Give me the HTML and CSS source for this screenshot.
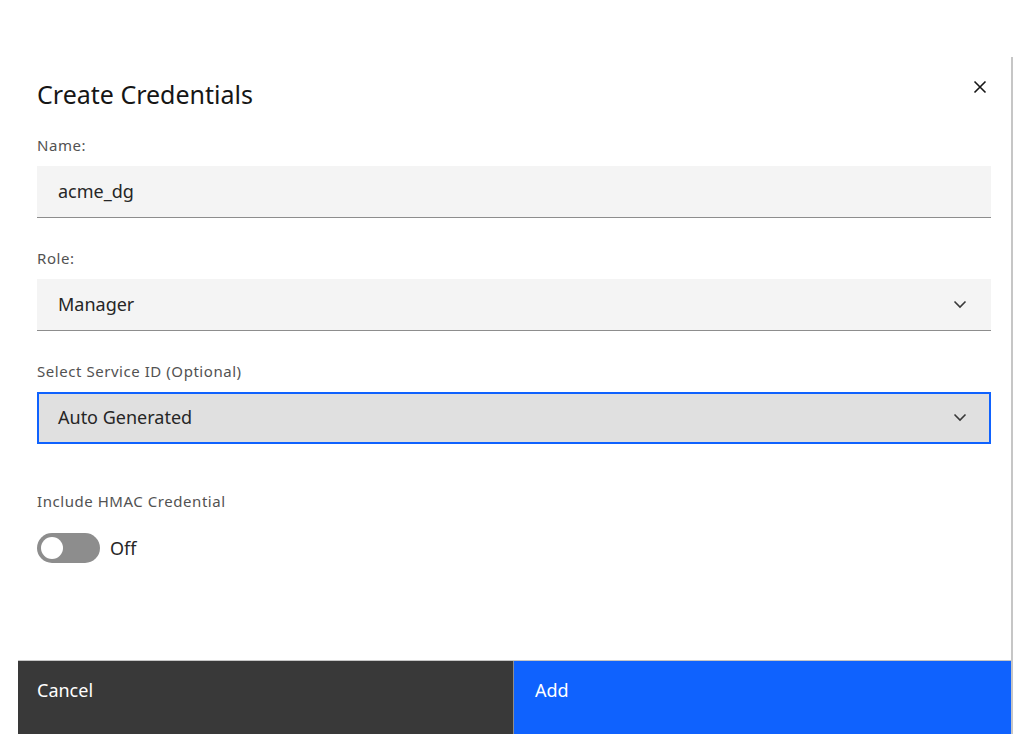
FILE: index.html
```html
<!DOCTYPE html>
<html lang="en">
<head>
<meta charset="utf-8">
<title>Create Credentials</title>
<link rel="stylesheet" href="styles.css">
</head>
<body>
<div class="modal">
  <div class="content">
    <div class="header">
      <h1 class="title">Create Credentials</h1>
      <button class="close" aria-label="Close">
        <svg width="16" height="16" viewBox="0 0 16 16"><path d="M2.5 2.5 L13.5 13.5 M13.5 2.5 L2.5 13.5" stroke="#161616" stroke-width="1.6" fill="none"/></svg>
      </button>
    </div>

    <div class="field">
      <label class="label">Name:</label>
      <div class="input">acme_dg</div>
    </div>

    <div class="field">
      <label class="label">Role:</label>
      <div class="input select">
        <span>Manager</span>
        <svg class="chev" width="16" height="16" viewBox="0 0 16 16"><path d="M2.5 5.5 L8 11 L13.5 5.5" stroke="#393939" stroke-width="1.6" fill="none"/></svg>
      </div>
    </div>

    <div class="field">
      <label class="label">Select Service ID (Optional)</label>
      <div class="input select focused">
        <span>Auto Generated</span>
        <svg class="chev" width="16" height="16" viewBox="0 0 16 16"><path d="M2.5 5.5 L8 11 L13.5 5.5" stroke="#393939" stroke-width="1.6" fill="none"/></svg>
      </div>
    </div>

    <div class="field toggle-field">
      <label class="label">Include HMAC Credential</label>
      <div class="toggle-row">
        <span class="toggle"><span class="knob"></span></span>
        <span class="toggle-text">Off</span>
      </div>
    </div>
  </div>

  <div class="footer">
    <button class="btn cancel">Cancel</button>
    <button class="btn add">Add</button>
  </div>
</div>
</body>
</html>
```

FILE: styles.css
```css
* { box-sizing: border-box; }

html, body {
  margin: 0;
  padding: 0;
  background: #ffffff;
  font-family: "Noto Sans", "Open Sans", "Liberation Sans", sans-serif;
  color: #161616;
}

.modal {
  margin: 57px 0 0 18px;
  width: 995px;
  height: 677px;
  border-right: 2px solid #c6c6c6;
  display: flex;
  flex-direction: column;
  background: #ffffff;
}

.content {
  flex: 1;
  padding: 21px 20px 0 19px;
}

.header {
  display: flex;
  align-items: flex-start;
  justify-content: space-between;
  margin-bottom: 26px;
}

.title {
  margin: 0;
  font-size: 25px;
  line-height: 32px;
  font-weight: 400;
  color: #161616;
}

.close {
  border: none;
  background: none;
  padding: 0;
  margin: 1px 3px 0 0;
  width: 16px;
  height: 16px;
  display: flex;
}

.field {
  display: flex;
  flex-direction: column;
  margin-bottom: 31px;
}

.label {
  font-size: 15px;
  line-height: 18px;
  color: #525252;
  letter-spacing: 0.55px;
  margin-bottom: 12px;
}

.input {
  height: 52px;
  background: #f4f4f4;
  border-bottom: 1px solid #8d8d8d;
  padding: 0 21px 2px;
  display: flex;
  align-items: center;
  font-size: 18px;
  color: #262626;
}

.select {
  justify-content: space-between;
  padding-right: 23px;
}

.focused {
  background: #e0e0e0;
  border: 2px solid #0f62fe;
  padding-left: 19px;
  padding-right: 21px;
}

.toggle-field {
  margin-top: 48px;
}

.toggle-field .label {
  margin-bottom: 23px;
}

.toggle-row {
  display: flex;
  align-items: center;
  gap: 10px;
}

.toggle {
  width: 63px;
  height: 30px;
  border-radius: 15px;
  background: #8d8d8d;
  display: flex;
  align-items: center;
  padding-left: 4px;
}

.knob {
  width: 22px;
  height: 22px;
  border-radius: 50%;
  background: #ffffff;
}

.toggle-text {
  font-size: 18px;
  color: #262626;
}

.footer {
  display: flex;
  height: 74px;
  border-top: 1px solid #c6c6c6;
}

.btn {
  flex: 1;
  border: none;
  margin: 0;
  font-family: inherit;
  font-size: 18px;
  text-align: left;
  padding: 0 19px 16px;
  display: flex;
  align-items: center;
  color: #ffffff;
}

.cancel {
  background: #393939;
  border-right: 1px solid #8d8d8d;
}

.add {
  background: #0f62fe;
  padding-left: 21px;
}
```
